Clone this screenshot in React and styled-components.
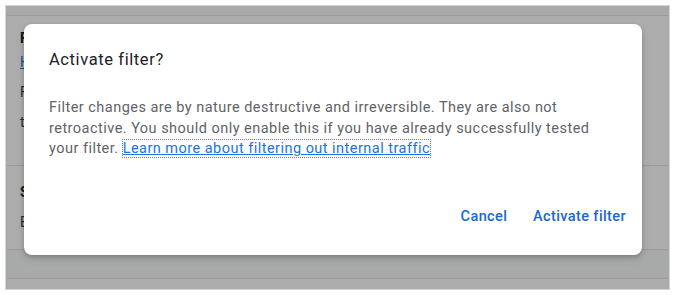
import React from 'react';
import styled, { createGlobalStyle } from 'styled-components';

const GlobalStyle = createGlobalStyle`
  html, body {
    margin: 0;
    padding: 0;
    background: #ffffff;
    font-family: Roboto, "Liberation Sans", sans-serif;
  }
`;

export default function App() {
    return (
        <>
            <GlobalStyle />
            <Page>
                <Frame>
                    <BehindPage>
                        <Card>
                            <Section>
                                <Heading>Filter name</Heading>
                                <FakeLink>Help</FakeLink>
                                <Line>Filter operation</Line>
                                <Line>test</Line>
                            </Section>
                            <Section bordered>
                                <Heading>Settings</Heading>
                                <Line>Edit</Line>
                            </Section>
                        </Card>
                        <Strip />
                    </BehindPage>
                    <Scrim />
                    <Dialog role="dialog">
                        <Title>Activate filter?</Title>
                        <Body>
                            Filter changes are by nature destructive and irreversible. They are also not
                            retroactive. You should only enable this if you have already successfully tested
                            your filter. <Link href="#">Learn more about filtering out internal traffic</Link>
                        </Body>
                        <Actions>
                            <TextButton>Cancel</TextButton>
                            <TextButton>Activate filter</TextButton>
                        </Actions>
                    </Dialog>
                </Frame>
            </Page>
        </>
    );
}

const Page = styled.div`
  width: 675px;
  height: 295px;
  padding: 5px;
  box-sizing: border-box;
`;

const Frame = styled.div`
  position: relative;
  width: 665px;
  height: 285px;
  border: 1px solid #d4d4d4;
  box-sizing: border-box;
  overflow: hidden;
  background: #f8f9fa;
`;

const BehindPage = styled.div`
  padding: 9px 1px 0 1px;
  display: flex;
  flex-direction: column;
`;

const Card = styled.div`
  background: #ffffff;
  border-top: 1px solid #e3e3e3;
  border-bottom: 1px solid #e3e3e3;
  height: 235px;
  box-sizing: border-box;
`;

const Section = styled.div`
  padding: 14px 0 0 13px;
  display: flex;
  flex-direction: column;
  gap: 8px;
  height: ${(p) => (p.bordered ? 'auto' : '149px')};
  box-sizing: border-box;
  border-top: ${(p) => (p.bordered ? '1px solid #e3e3e3' : 'none')};
  padding-top: ${(p) => (p.bordered ? '18px' : '14px')};
`;

const Heading = styled.div`
  font-size: 14px;
  font-weight: 700;
  color: #202124;
`;

const FakeLink = styled.div`
  font-size: 14px;
  color: #1a73e8;
  text-decoration: underline;
`;

const Line = styled.div`
  font-size: 14px;
  color: #3c4043;
  margin-top: 6px;
`;

const Strip = styled.div`
  margin-top: 28px;
  border-top: 1px solid #e3e3e3;
  height: 20px;
  background: #ffffff;
`;

const Scrim = styled.div`
  position: absolute;
  inset: 0;
  background: rgba(0, 0, 0, 0.32);
`;

const Dialog = styled.div`
  position: absolute;
  left: 18px;
  top: 18px;
  width: 618px;
  height: 231px;
  box-sizing: border-box;
  background: #ffffff;
  border-radius: 8px;
  box-shadow: 0 2px 4px rgba(0, 0, 0, 0.18), 0 4px 10px rgba(0, 0, 0, 0.1);
  padding: 24px 8px 21px 25px;
  display: flex;
  flex-direction: column;
`;

const Title = styled.h2`
  margin: 0;
  font-family: Roboto, "Liberation Sans", sans-serif;
  font-size: 16.5px;
  line-height: 24px;
  font-weight: 400;
  color: #202124;
  letter-spacing: 0.6px;
`;

const Body = styled.p`
  margin: 26px 0 0 0;
  padding-right: 24px;
  font-size: 14.5px;
  line-height: 20.5px;
  letter-spacing: 0.47px;
  color: #5f6368;
`;

const Link = styled.a`
  color: #1a73e8;
  text-decoration: underline;
  outline: 1px dotted #4285f4;
  outline-offset: 0;
`;

const Actions = styled.div`
  margin-top: auto;
  display: flex;
  justify-content: flex-end;
  gap: 9px;
`;

const TextButton = styled.button`
  min-width: 64px;
  height: 36px;
  padding: 0 8px;
  border: none;
  background: transparent;
  border-radius: 4px;
  font-family: Roboto, "Liberation Sans", sans-serif;
  font-size: 14.5px;
  font-weight: 500;
  letter-spacing: 0.4px;
  color: #1967d2;
  cursor: pointer;
`;
